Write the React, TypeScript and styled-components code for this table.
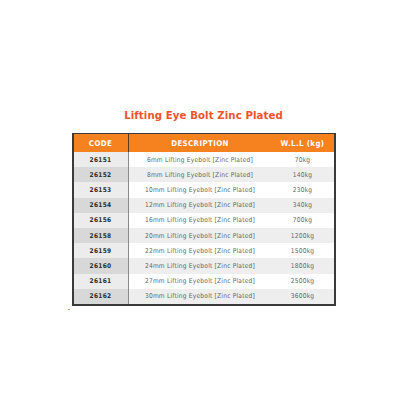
import React from "react";
import styled, { createGlobalStyle } from "styled-components";

const Global = createGlobalStyle`
  html, body { margin: 0; padding: 0; background: #ffffff; }
  body { font-family: "DejaVu Sans Condensed", "DejaVu Sans", sans-serif; }
`;

const Page = styled.div`
  width: 400px;
  height: 400px;
  display: flex;
  flex-direction: column;
  align-items: center;
  padding: 107px 0 0 7px;
  box-sizing: border-box;
`;

const Title = styled.h1`
  margin: 0 0 8px 0;
  font-family: "DejaVu Sans Condensed", "DejaVu Sans", sans-serif;
  font-weight: bold;
  font-size: 11.3px;
  line-height: 18px;
  color: #f0532b;
  letter-spacing: 0.1px;
`;

const Table = styled.div`
  width: 264px;
  box-sizing: border-box;
  border: 2px solid #3a3a3a;
  border-top-width: 1px;
  display: grid;
  grid-template-columns: 55px 143px 1fr;
`;

const HeadCell = styled.div<{ $divider?: boolean }>`
  height: 18px;
  background: #f6821f;
  color: #ffffff;
  font-weight: bold;
  font-size: 7.8px;
  letter-spacing: 0.4px;
  display: flex;
  align-items: center;
  justify-content: center;
  border-right: ${(p) => (p.$divider ? "1px solid #5a3a20" : "none")};
`;

const CodeCell = styled.div<{ $alt: boolean }>`
  height: 15.2px;
  background: ${(p) => (p.$alt ? "#d8d8d8" : "#ececec")};
  border-right: 1px solid #8a8a8a;
  color: #2e2e2e;
  font-weight: bold;
  font-size: 6.5px;
  letter-spacing: 0.3px;
  display: flex;
  align-items: center;
  justify-content: center;
`;

const Cell = styled.div<{ $alt: boolean }>`
  height: 15.2px;
  background: ${(p) => (p.$alt ? "#eeeeee" : "#ffffff")};
  color: #666666;
  font-size: 6.6px;
  letter-spacing: 0.2px;
  display: flex;
  align-items: center;
  justify-content: center;
`;

const Mark = styled.div`
  align-self: flex-start;
  margin: 3px 0 0 61px;
  width: 2px;
  height: 1px;
  background: #d9a060;
`;

const rows: [string, string, string][] = [
  ["26151", "6mm Lifting Eyebolt [Zinc Plated]", "70kg"],
  ["26152", "8mm Lifting Eyebolt [Zinc Plated]", "140kg"],
  ["26153", "10mm Lifting Eyebolt [Zinc Plated]", "230kg"],
  ["26154", "12mm Lifting Eyebolt [Zinc Plated]", "340kg"],
  ["26156", "16mm Lifting Eyebolt [Zinc Plated]", "700kg"],
  ["26158", "20mm Lifting Eyebolt [Zinc Plated]", "1200kg"],
  ["26159", "22mm Lifting Eyebolt [Zinc Plated]", "1500kg"],
  ["26160", "24mm Lifting Eyebolt [Zinc Plated]", "1800kg"],
  ["26161", "27mm Lifting Eyebolt [Zinc Plated]", "2500kg"],
  ["26162", "30mm Lifting Eyebolt [Zinc Plated]", "3600kg"],
];

export default function App() {
  return (
    <>
      <Global />
      <Page>
        <Title>Lifting Eye Bolt Zinc Plated</Title>
        <Table>
          <HeadCell $divider>CODE</HeadCell>
          <HeadCell>DESCRIPTION</HeadCell>
          <HeadCell>W.L.L (kg)</HeadCell>
          {rows.map(([c, d, w], i) => (
            <React.Fragment key={c}>
              <CodeCell $alt={i % 2 === 1}>{c}</CodeCell>
              <Cell $alt={i % 2 === 1}>{d}</Cell>
              <Cell $alt={i % 2 === 1}>{w}</Cell>
            </React.Fragment>
          ))}
        </Table>
        <Mark />
      </Page>
    </>
  );
}
